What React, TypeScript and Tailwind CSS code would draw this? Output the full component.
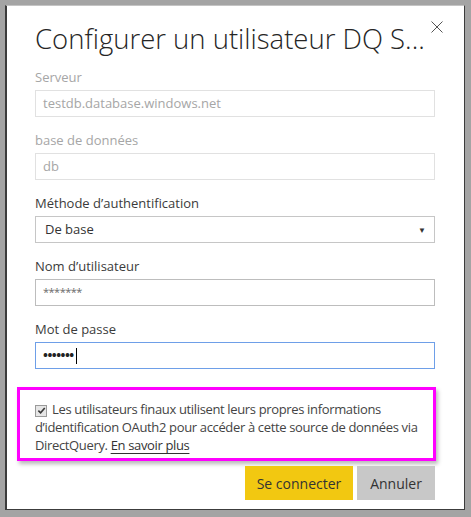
import type { ReactNode } from "react";

const body = "font-['Open_Sans',sans-serif]";

function Field({
  label,
  disabled = false,
  children,
}: {
  label: string;
  disabled?: boolean;
  children: ReactNode;
}) {
  return (
    <div className="flex flex-col">
      <label
        className={`mb-[4px] h-[18px] text-[13px] leading-[18px] ${disabled ? "text-[#a6a6a6]" : "text-[#3b3b3b]"}`}
      >
        {label}
      </label>
      {children}
    </div>
  );
}

function CheckMark() {
  return (
    <span className="relative top-[1px] mr-[5px] inline-flex h-[12px] w-[12px] items-center justify-center border border-[#9a9a9a] bg-[#e6e6e6] align-baseline">
      <svg viewBox="0 0 10 10" className="h-[9px] w-[9px]">
        <path d="M1.5 5.2 L4 7.6 L8.6 2.2" fill="none" stroke="#3a3a3a" strokeWidth="1.8" />
      </svg>
    </span>
  );
}

export default function App() {
  return (
    <div className={`h-[517px] w-[471px] bg-[#a4a4a4] py-[5px] pl-[5px] pr-[6px] ${body}`}>
      <div className="relative flex h-[505px] flex-col border-b border-l-2 border-r border-t border-b-[#3c3c3c] border-l-[#3c3c3c] border-r-[#3c3c3c] border-t-[#c4c4c4] bg-white pb-[7px] pl-[28px] pr-[29px] pt-[15px]">
        <button
          type="button"
          aria-label="Fermer"
          className="absolute right-[21px] top-[15px] h-[12px] w-[12px]"
        >
          <svg viewBox="0 0 12 12" className="h-[12px] w-[12px]">
            <path d="M0.5 0.5 L11.5 11.5 M11.5 0.5 L0.5 11.5" stroke="#555" strokeWidth="1" />
          </svg>
        </button>

        <h1 className="mb-[11px] h-[36px] text-[27.5px] font-light leading-[36px] whitespace-nowrap text-[#252525]">
          Configurer un utilisateur DQ S...
        </h1>

        <div className="flex flex-col gap-[14px]">
          <Field label="Serveur" disabled>
            <div className="flex h-[27px] items-center border border-[#e1e1e1] px-[7px] text-[13px] text-[#a6a6a6]">
              testdb.database.windows.net
            </div>
          </Field>
          <Field label="base de données" disabled>
            <div className="flex h-[27px] items-center border border-[#e1e1e1] px-[7px] text-[13px] text-[#a6a6a6]">
              db
            </div>
          </Field>
          <Field label="Méthode d’authentification">
            <div className="flex h-[27px] items-center justify-between border border-[#c6c6c6] pl-[9px] pr-[8px] text-[13px] text-[#333]">
              <span>De base</span>
              <span className="text-[8px] text-[#333]">▼</span>
            </div>
          </Field>
          <Field label="Nom d’utilisateur">
            <div className="flex h-[27px] items-center border border-[#bdbdbd] px-[7px] text-[11px] tracking-[-0.5px] text-[#6a6a6a]">
              *******
            </div>
          </Field>
          <Field label="Mot de passe">
            <div className="flex h-[27px] items-center border border-[#6e9fe8] px-[7px] text-[13px] text-[#222]">
              <span className="font-bold tracking-[-0.5px]">•••••••</span>
              <span className="ml-[2px] h-[16px] w-px bg-black" />
            </div>
          </Field>
        </div>

        <div className="mt-[18px] ml-[-18px] mr-[-1px] h-[74px] border-[3px] border-[#ff00ff] bg-white pb-[4px] pl-[15px] pr-[8px] pt-[10px] shadow-[2px_3px_4px_rgba(0,0,0,0.28)]">
          <p className="text-[13px] leading-[18px] tracking-[-0.35px] text-[#444]">
            <CheckMark />
            Les utilisateurs finaux utilisent leurs propres informations d’identification OAuth2 pour
            accéder à cette source de données via DirectQuery.{" "}
            <a className="text-[#333] underline decoration-[#333] underline-offset-[3px]">
              En savoir plus
            </a>
          </p>
        </div>

        <div className="mt-[5px] flex justify-end gap-[4px]">
          <button
            type="button"
            className="h-[34px] w-[108px] bg-[#f2c811] text-[14px] text-[#333]"
          >
            Se connecter
          </button>
          <button
            type="button"
            className="h-[34px] w-[78px] bg-[#c8c8c8] text-[14px] text-[#333]"
          >
            Annuler
          </button>
        </div>
      </div>
    </div>
  );
}
